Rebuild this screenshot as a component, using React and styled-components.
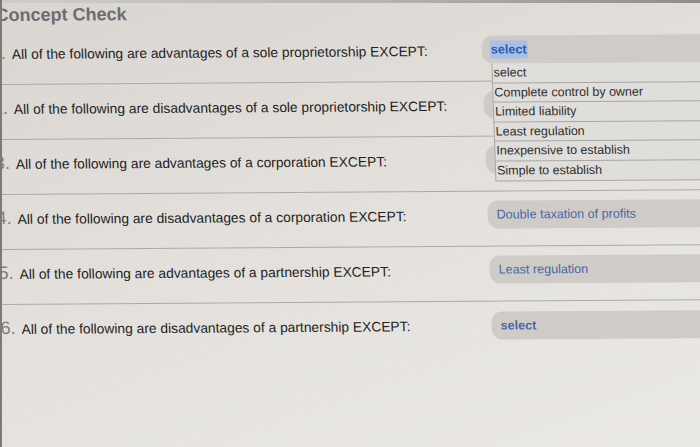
import styled, { createGlobalStyle } from 'styled-components';

const GlobalStyle = createGlobalStyle`
    html, body {
        margin: 0;
        padding: 0;
        overflow: hidden;
        background: #e2dfdb;
    }
`;

const questions = [
    { n: 1, text: 'All of the following are advantages of a sole proprietorship EXCEPT:', value: 'select', open: true },
    { n: 2, text: 'All of the following are disadvantages of a sole proprietorship EXCEPT:', value: 'select' },
    { n: 3, text: 'All of the following are advantages of a corporation EXCEPT:', value: 'select' },
    { n: 4, text: 'All of the following are disadvantages of a corporation EXCEPT:', value: 'Double taxation of profits' },
    { n: 5, text: 'All of the following are advantages of a partnership EXCEPT:', value: 'Least regulation' },
    { n: 6, text: 'All of the following are disadvantages of a partnership EXCEPT:', value: 'select' },
];

const options = [
    'select',
    'Complete control by owner',
    'Limited liability',
    'Least regulation',
    'Inexpensive to establish',
    'Simple to establish',
];

function App() {
    return (
        <Page>
            <GlobalStyle />
            <Sheet>
                <Title>Concept Check</Title>
                {questions.map((q) => (
                    <Row key={q.n}>
                        <Question>
                            <Num>{q.n}.</Num>
                            {q.text}
                        </Question>
                        <Pill>
                            <PillText $placeholder={q.value === 'select'} $focused={q.open}>
                                {q.value}
                            </PillText>
                            {q.open && (
                                <Dropdown>
                                    {options.map((o) => (
                                        <Option key={o}>{o}</Option>
                                    ))}
                                </Dropdown>
                            )}
                        </Pill>
                    </Row>
                ))}
            </Sheet>
        </Page>
    );
}

export default App;

const Page = styled.div`
    width: 698px;
    height: 447px;
    border-left: 2px solid #7c7a77;
    overflow: hidden;
    position: relative;
    background: linear-gradient(160deg, #d9d6d2 0%, #e3e0dc 45%, #ebe9e5 100%);
    font-family: 'Liberation Sans', Arial, sans-serif;

    &::before {
        content: '';
        position: absolute;
        top: 0;
        left: 0;
        right: 0;
        height: 3px;
        background: linear-gradient(90deg, #cfcdca 0%, #b9b7b4 50%, #8f8d8a 100%);
        z-index: 3;
    }
`;

const Sheet = styled.div`
    width: 760px;
    margin-left: -24px;
    transform: skew(2deg, -0.4deg);
    transform-origin: 24px 0;
`;

const Title = styled.div`
    height: 29.5px;
    box-sizing: border-box;
    padding: 4px 0 0 17px;
    font-size: 18px;
    line-height: 22px;
    font-weight: bold;
    color: #6e6d6b;
`;

const Row = styled.div`
    display: grid;
    grid-template-columns: 502px 1fr;
    align-items: center;
    height: 55px;
    box-sizing: border-box;
    padding-bottom: 7px;
    border-bottom: 1px solid #acaaa6;

    &:last-child {
        border-bottom: none;
    }
`;

const Question = styled.div`
    font-size: 13.8px;
    color: #222;
    white-space: nowrap;
    padding-left: 11px;
`;

const Num = styled.span`
    font-size: 18px;
    color: #7f7e7c;
    margin-right: 6px;
`;

const Pill = styled.div`
    position: relative;
    height: 28px;
    border-radius: 11px 0 0 11px;
    background: #cfccc8;
    display: flex;
    align-items: center;
    padding-left: 8px;
`;

const PillText = styled.span`
    font-size: 12.6px;
    color: ${(p) => (p.$focused ? '#2a5cb2' : '#4a68a6')};
    font-weight: ${(p) => (p.$placeholder ? 'bold' : 'normal')};
    background: ${(p) => (p.$focused ? '#a9c0e4' : 'transparent')};
    padding: 2px 1px;
`;

const Dropdown = styled.div`
    position: absolute;
    top: 100%;
    left: 9px;
    width: 260px;
    z-index: 2;
    background: #e0deda;
    border-left: 1px solid #a9a7a3;
`;

const Option = styled.div`
    height: 19.6px;
    box-sizing: border-box;
    padding-left: 1px;
    font-size: 12.5px;
    line-height: 19px;
    color: #2d2d2d;
    border-bottom: 1px solid #a9a7a3;
    white-space: nowrap;
`;
